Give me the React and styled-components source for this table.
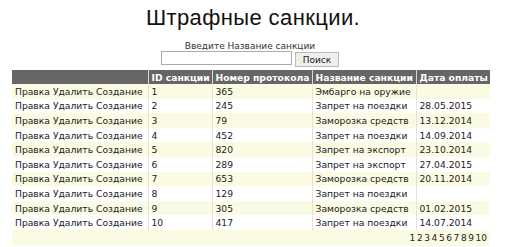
import React from "react";
import styled, { createGlobalStyle } from "styled-components";

const Global = createGlobalStyle`
  html, body { margin: 0; padding: 0; background: #fff; }
  body { font-family: "DejaVu Sans", Verdana, sans-serif; color: #222; }
`;

const Page = styled.div`
  width: 506px;
  display: flex;
  flex-direction: column;
  align-items: center;
`;

const Title = styled.h1`
  margin: 6px 0 0 0;
  font-family: "Liberation Sans", Arial, sans-serif;
  font-weight: normal;
  font-size: 22px;
  letter-spacing: 0.4px;
  line-height: 24px;
  color: #111;
`;

const SearchForm = styled.form`
  margin-top: 11px;
  display: flex;
  flex-direction: column;
  align-items: center;
  margin-left: -6px;
`;

const Label = styled.div`
  font-size: 9px;
  line-height: 11px;
  color: #333;
`;

const SearchRow = styled.div`
  display: flex;
  align-items: flex-start;
  gap: 3px;
  margin-top: -1px;
`;

const Input = styled.input`
  box-sizing: border-box;
  width: 131px;
  height: 14px;
  border: 1px solid #aaa;
  padding: 0;
  margin: 0;
`;

const Button = styled.button`
  box-sizing: border-box;
  height: 15px;
  width: 44px;
  padding: 0;
  margin: 1px 0 0 0;
  font-family: "DejaVu Sans", Verdana, sans-serif;
  font-size: 9px;
  background: #eee;
  border: 1px solid #bbb;
  color: #222;
`;

const Table = styled.table`
  margin-top: 3px;
  margin-left: -4px;
  width: 478px;
  border-collapse: collapse;
  font-size: 9.2px;
  table-layout: fixed;
`;

const Th = styled.th`
  background: #666666;
  color: #fff;
  font-weight: bold;
  text-align: left;
  height: 14px;
  padding: 0 3px;
  border-left: 1px solid #d8d8d8;
  white-space: nowrap;
  &:first-child { border-left: none; }
`;

const Tr = styled.tr`
  background: ${(p) => (p.$odd ? "#fbfbe4" : "#ffffff")};
`;

const Td = styled.td`
  height: 14.6px;
  padding: 0 3px;
  white-space: nowrap;
  border-left: 1px solid #e2e2e2;
  color: #222;
  &:first-child { border-left: none; }
`;

const PagerCell = styled.td`
  height: 16px;
  padding: 0 3px;
  background: #fbfbe4;
`;

const Pager = styled.div`
  display: flex;
  justify-content: flex-end;
  gap: 1.6px;
  font-size: 9px;
`;

const PageLink = styled.span`
  color: #222;
`;

const rows = [
  [1, 365, "Эмбарго на оружие", ""],
  [2, 245, "Запрет на поездки", "28.05.2015"],
  [3, 79, "Заморозка средств", "13.12.2014"],
  [4, 452, "Запрет на поездки", "14.09.2014"],
  [5, 820, "Запрет на экспорт", "23.10.2014"],
  [6, 289, "Запрет на экспорт", "27.04.2015"],
  [7, 653, "Заморозка средств", "20.11.2014"],
  [8, 129, "Запрет на поездки", ""],
  [9, 305, "Заморозка средств", "01.02.2015"],
  [10, 417, "Запрет на поездки", "14.07.2014"],
];

export default function App() {
  return (
    <Page>
      <Global />
      <Title>Штрафные санкции.</Title>
      <SearchForm onSubmit={(e) => e.preventDefault()}>
        <Label>Введите Название санкции</Label>
        <SearchRow>
          <Input type="text" />
          <Button type="submit">Поиск</Button>
        </SearchRow>
      </SearchForm>
      <Table>
        <colgroup>
          <col style={{ width: 136 }} />
          <col style={{ width: 64 }} />
          <col style={{ width: 100 }} />
          <col style={{ width: 104 }} />
          <col style={{ width: 74 }} />
        </colgroup>
        <thead>
          <tr>
            <Th></Th>
            <Th>ID санкции</Th>
            <Th>Номер протокола</Th>
            <Th>Название санкции</Th>
            <Th>Дата оплаты</Th>
          </tr>
        </thead>
        <tbody>
          {rows.map((r, i) => (
            <Tr key={r[0]} $odd={i % 2 === 0}>
              <Td>Правка Удалить Создание</Td>
              <Td>{r[0]}</Td>
              <Td>{r[1]}</Td>
              <Td>{r[2]}</Td>
              <Td>{r[3]}</Td>
            </Tr>
          ))}
          <tr>
            <PagerCell colSpan={5}>
              <Pager>
                {[1, 2, 3, 4, 5, 6, 7, 8, 9, 10].map((n) => (
                  <PageLink key={n}>{n}</PageLink>
                ))}
              </Pager>
            </PagerCell>
          </tr>
        </tbody>
      </Table>
    </Page>
  );
}
